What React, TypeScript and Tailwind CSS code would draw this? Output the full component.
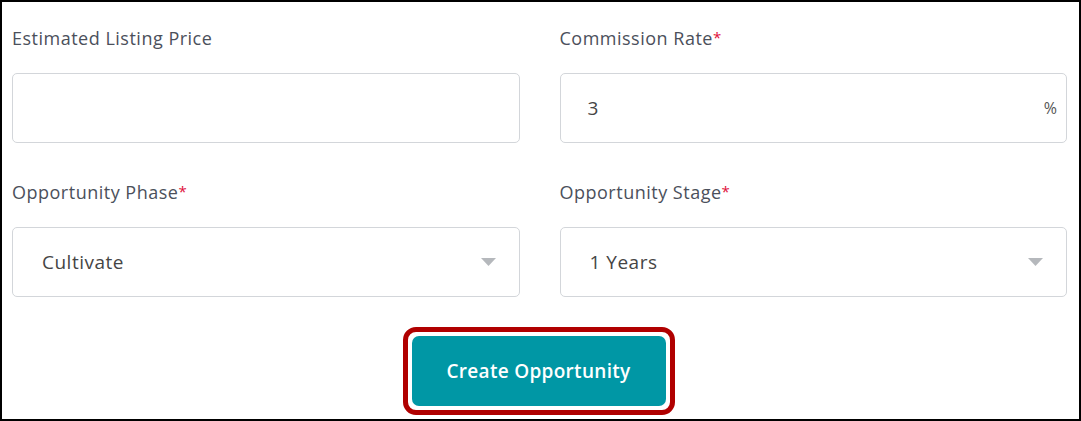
import React from "react";

const font = { fontFamily: "'Open Sans', Lato, sans-serif" };

function Label({ text, req }: { text: string; req?: boolean }) {
  return (
    <div className="h-[24px] leading-[24px] text-[18px] text-[#4b505b] mb-[23px] tracking-[0.5px]">
      {text}
      {req && <span className="text-[#e0103a] text-[15px] align-top relative top-[-1px]">*</span>}
    </div>
  );
}

function Caret() {
  return (
    <svg width="15" height="8" viewBox="0 0 15 8" className="shrink-0">
      <path d="M0 0 H15 L7.5 8 Z" fill="#b5b8bc" />
    </svg>
  );
}

export default function App() {
  return (
    <div
      className="w-[1081px] h-[421px] border-2 border-black bg-white box-border pl-[10px] pr-[12px] pt-[24px] flex flex-col"
      style={font}
    >
      <div className="grid grid-cols-2 gap-x-[40px]">
        <div>
          <Label text="Estimated Listing Price" />
          <div className="h-[70px] rounded-[5px] border border-[#d3d6da]" />
        </div>
        <div>
          <Label text="Commission Rate" req />
          <div className="h-[70px] rounded-[5px] border border-[#d3d6da] flex items-center pl-[27px] pr-[9px] text-[19px] text-[#454545]">
            <span className="flex-1">3</span>
            <span className="text-[16px] text-[#555]">%</span>
          </div>
        </div>
        <div className="mt-[37px]">
          <Label text="Opportunity Phase" req />
          <div className="h-[70px] rounded-[5px] border border-[#d3d6da] flex items-center pl-[29px] pr-[23px] text-[19px] tracking-[0.5px] text-[#454545]">
            <span className="flex-1">Cultivate</span>
            <Caret />
          </div>
        </div>
        <div className="mt-[37px]">
          <Label text="Opportunity Stage" req />
          <div className="h-[70px] rounded-[5px] border border-[#d3d6da] flex items-center pl-[29px] pr-[23px] text-[19px] tracking-[0.5px] text-[#454545]">
            <span className="flex-1">1 Years</span>
            <Caret />
          </div>
        </div>
      </div>
      <div className="flex justify-center mt-[30px]">
        <div className="rounded-[13px] border-[5px] border-[#b00000] p-[4px] ml-[-2px]">
          <button className="w-[254px] h-[70px] rounded-[7px] bg-[#0097a5] text-white text-[19px] tracking-[0.3px] font-semibold block">
            Create Opportunity
          </button>
        </div>
      </div>
    </div>
  );
}
